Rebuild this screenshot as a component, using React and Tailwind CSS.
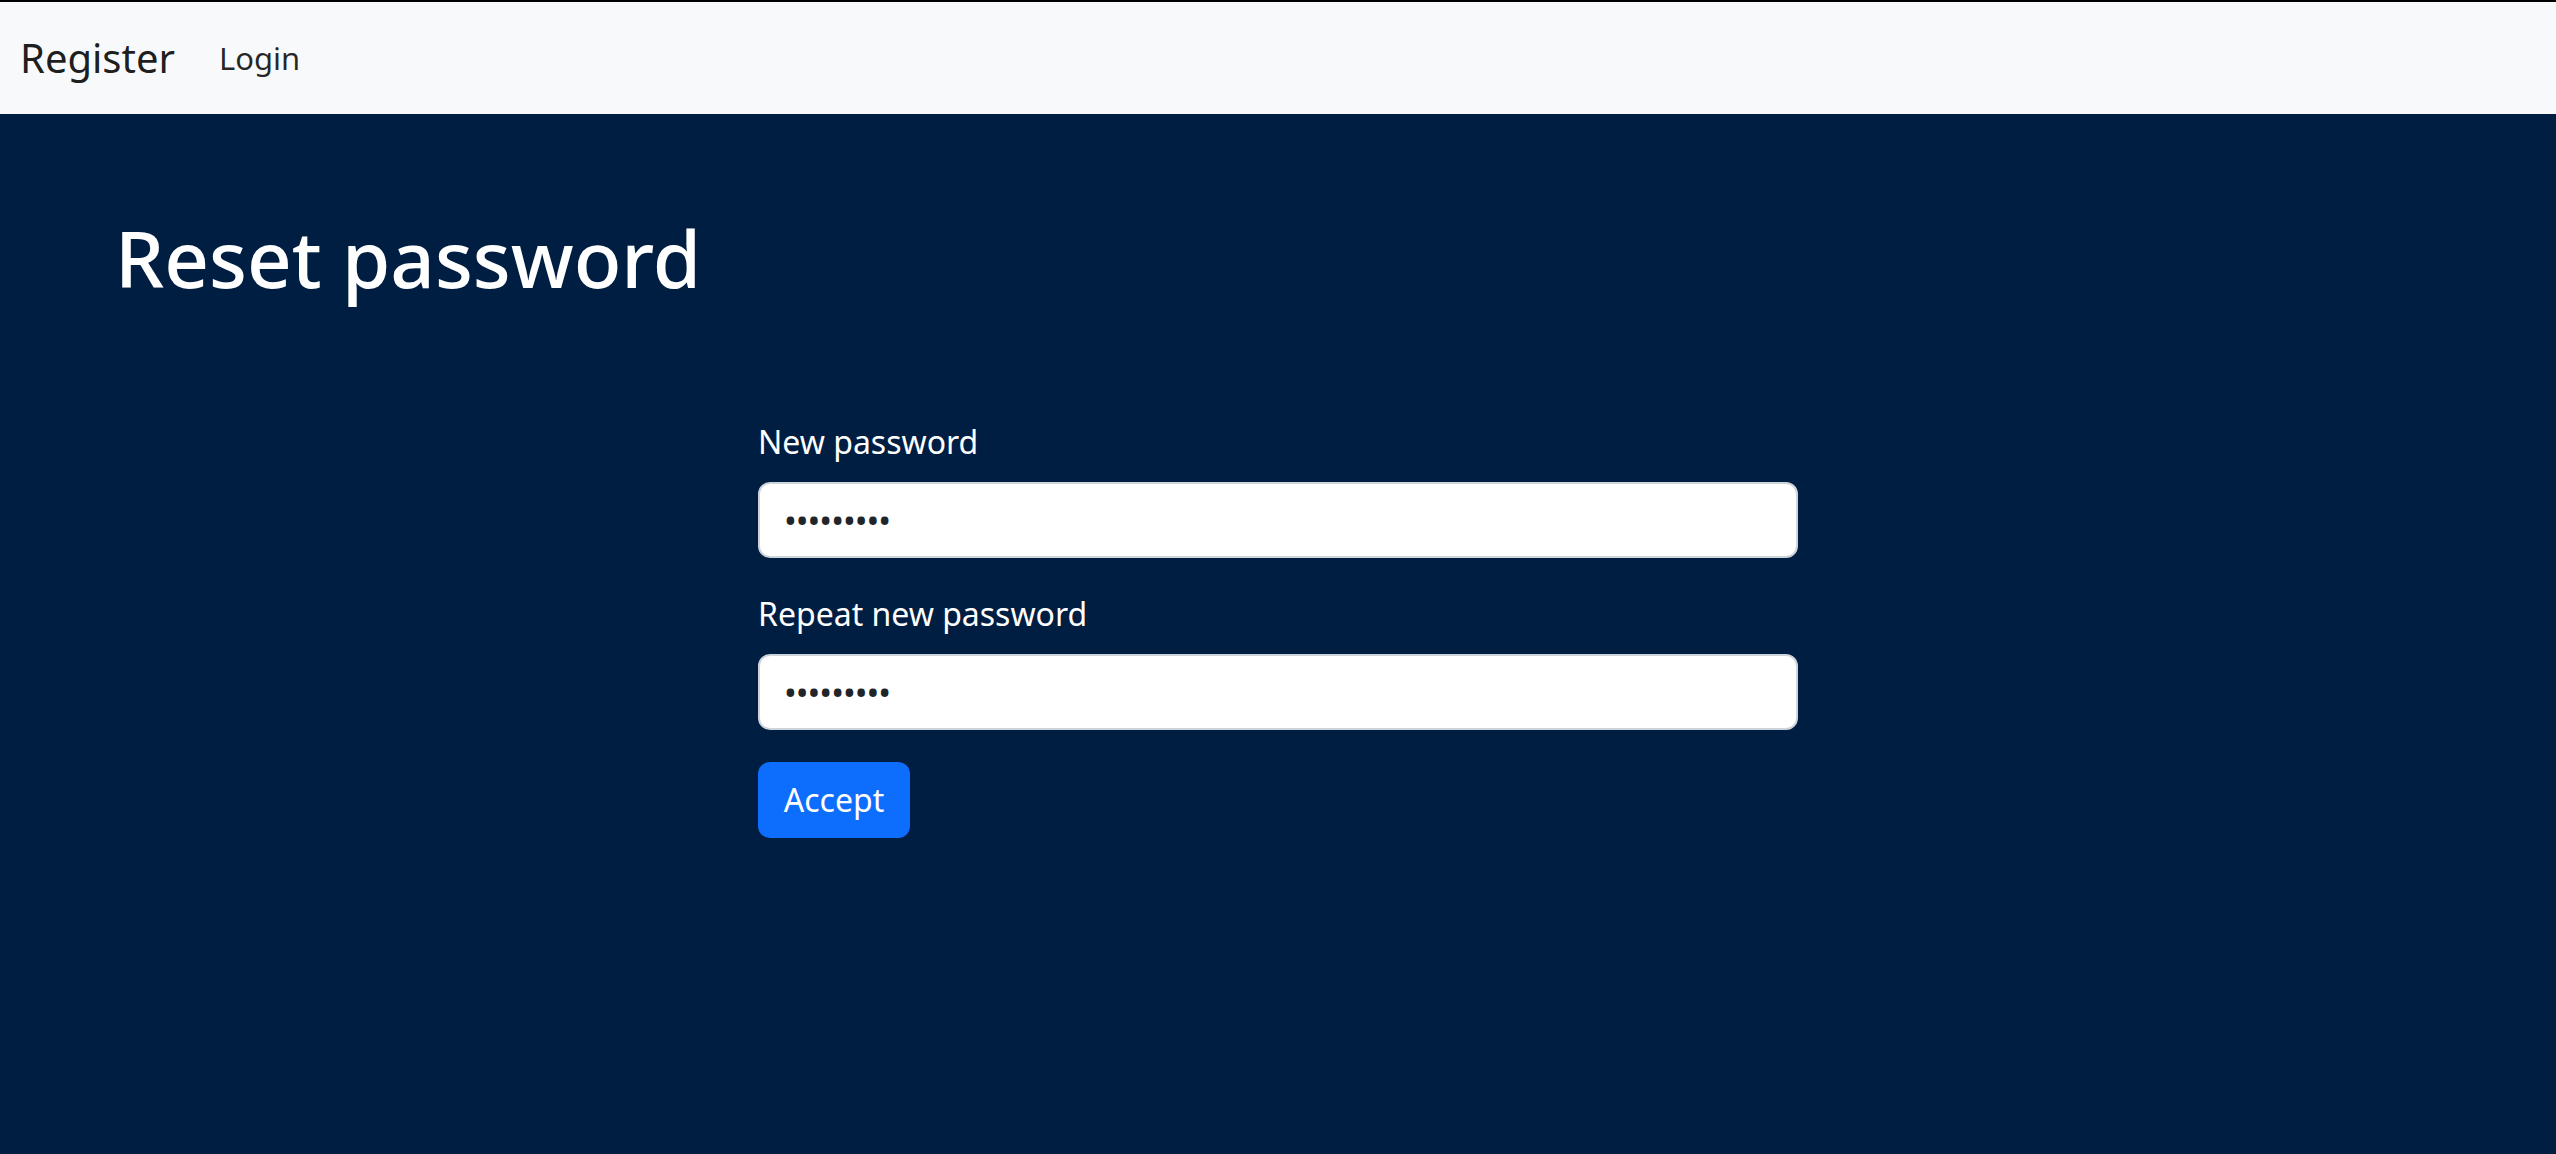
export default function App() {
  return (
    <div className="min-h-[1154px] flex flex-col bg-[#001d42] font-['Noto_Sans',sans-serif]">
      <div className="h-[2px] bg-black" />
      <nav className="h-[112px] bg-[#f8f9fa] flex items-center px-[20px]">
        <a className="text-[40px] leading-[60px] text-[rgba(0,0,0,0.9)] mr-[28px]">Register</a>
        <a className="text-[31px] leading-[48px] text-[rgba(0,0,0,0.85)] px-[16px]">Login</a>
      </nav>
      <main className="flex-1 flex flex-col">
        <h1 className="text-white text-[78px] leading-[96px] font-medium pl-[115px] mt-[96px]">Reset password</h1>
        <form className="mx-auto w-[1040px] flex flex-col mt-[112px]">
          <label className="text-white text-[32px] leading-[48px] mb-[16px]">New password</label>
          <input
            type="password"
            defaultValue="123456789"
            className="h-[76px] bg-white border-2 border-[#ced4da] rounded-[12px] px-[24px] text-[34px] text-[#212529] tracking-[-1px] outline-none mb-[32px]"
          />
          <label className="text-white text-[32px] leading-[48px] mb-[16px]">Repeat new password</label>
          <input
            type="password"
            defaultValue="123456789"
            className="h-[76px] bg-white border-2 border-[#ced4da] rounded-[12px] px-[24px] text-[34px] text-[#212529] tracking-[-1px] outline-none mb-[32px]"
          />
          <div>
            <button
              type="button"
              className="h-[76px] w-[152px] bg-[#0d6efd] rounded-[12px] text-white text-[32px] leading-[48px]"
            >
              Accept
            </button>
          </div>
        </form>
      </main>
    </div>
  );
}
